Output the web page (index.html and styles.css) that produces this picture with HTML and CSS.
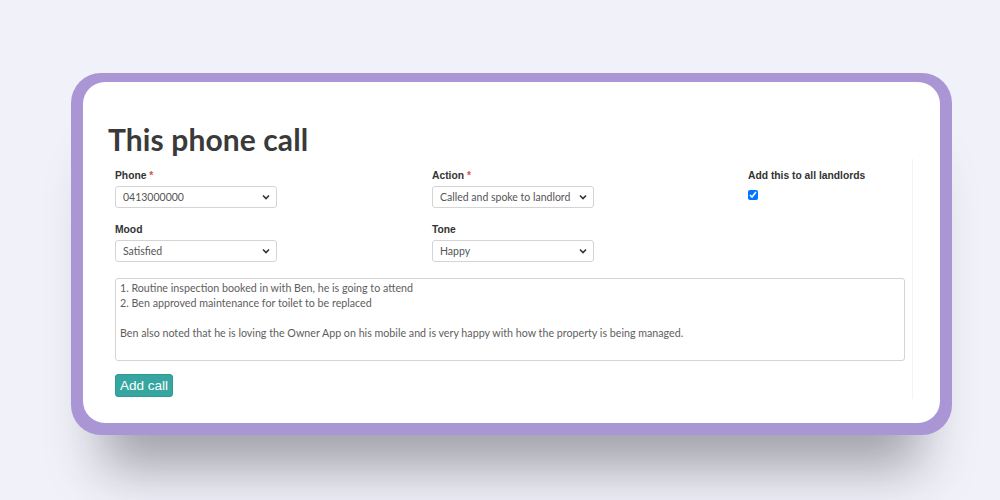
FILE: index.html
```html
<!DOCTYPE html>
<html lang="en">
<head>
  <meta charset="UTF-8" />
  <title>This phone call</title>
  <link rel="stylesheet" href="styles.css">
</head>
<body>

  <div class="frame">
    <div class="card">
      <h1>This phone call</h1>
      <form class="panel">
        <div class="fields">
          <div class="field">
            <label>Phone <span class="req">*</span></label>
            <select><option>0413000000</option></select>
          </div>
          <div class="field">
            <label>Action <span class="req">*</span></label>
            <select><option>Called and spoke to landlord</option></select>
          </div>
          <div class="field">
            <label>Add this to all landlords</label>
            <input type="checkbox" checked>
          </div>
          <div class="field">
            <label>Mood</label>
            <select><option>Satisfied</option></select>
          </div>
          <div class="field">
            <label>Tone</label>
            <select><option>Happy</option></select>
          </div>
        </div>
        <textarea class="notes">1. Routine inspection booked in with Ben, he is going to attend
2. Ben approved maintenance for toilet to be replaced

Ben also noted that he is loving the Owner App on his mobile and is very happy with how the property is being managed.</textarea>
        <button type="button" class="add">Add call</button>
      </form>
    </div>
  </div>

</body>
</html>
```
FILE: styles.css
```css
body {
  margin: 0;
  background: #f1f1fa;
  font-family: "Liberation Sans", Arial, sans-serif;
  height: 500px;
  overflow: hidden;
}

/* purple frame round the screenshot */
.frame {
  margin: 73px 0 0 71px;
  width: 881px;
  height: 362px;
  box-sizing: border-box;
  padding: 9px 12px 12px 12px;
  background: #ab96d5;
  border-radius: 30px;
  box-shadow: 0 64px 50px -32px rgba(40, 40, 50, 0.4);
}

.card {
  height: 100%;
  background: #fff;
  border-radius: 22px;
  padding: 37px 0 0 25px;
  box-sizing: border-box;
}

h1 {
  margin: 0;
  font-family: Lato, "Open Sans", sans-serif;
  font-weight: 700;
  font-size: 30px;
  line-height: 40px;
  color: #3a3a3a;
  letter-spacing: 0.1px;
}

.panel {
  margin: 0;
  padding: 11px 0 0 7px;
  width: 805px;
  height: 240px;
  box-sizing: border-box;
  border-right: 1px solid #f3f3f3;
}

.fields {
  display: grid;
  grid-template-columns: 317px 316px auto;
  row-gap: 16px;
}

.field label {
  display: block;
  font-size: 10.3px;
  font-weight: 700;
  color: #333;
  margin-bottom: 5px;
}

.req {
  color: #d9534f;
}

select {
  appearance: none;
  width: 162px;
  height: 22px;
  padding: 0 20px 0 7px;
  border: 1px solid #d4d4d4;
  border-radius: 3px;
  background: #fff url("data:image/svg+xml,%3Csvg xmlns='http://www.w3.org/2000/svg' width='8' height='6' viewBox='0 0 8 6'%3E%3Cpath d='M1 1.5l3 3 3-3' fill='none' stroke='%23333' stroke-width='1.6'/%3E%3C/svg%3E") no-repeat right 6px center;
  font-family: Lato, sans-serif;
  font-size: 10.5px;
  color: #555;
}

input[type="checkbox"] {
  margin: 0;
  width: 10px;
  height: 10px;
}

.notes {
  display: block;
  margin-top: 16px;
  width: 790px;
  height: 83px;
  box-sizing: border-box;
  padding: 1px 4px;
  border: 1px solid #d4d4d4;
  border-radius: 3px;
  resize: none;
  font-family: Lato, sans-serif;
  font-size: 10.7px;
  line-height: 15px;
  color: #5e5e5e;
}

.add {
  margin-top: 13px;
  height: 23px;
  padding: 0 4px;
  border: 1px solid #2f9893;
  border-radius: 3px;
  background: #37a6a0;
  color: #fff;
  font-family: "Liberation Sans", Arial, sans-serif;
  font-size: 13.5px;
}
```
